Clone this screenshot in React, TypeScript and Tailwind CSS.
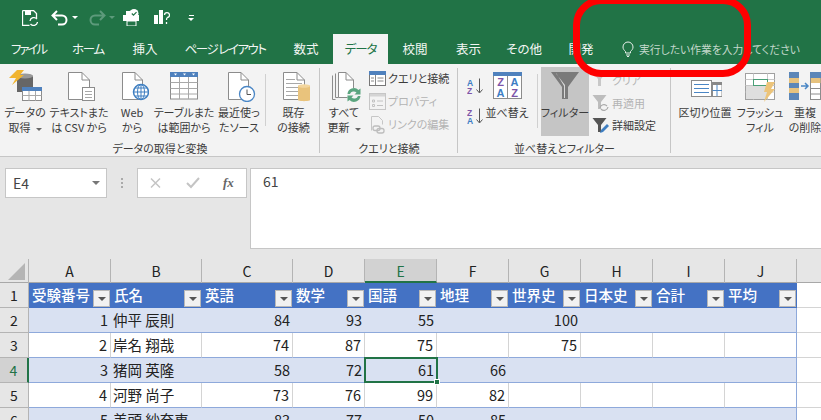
import React from 'react';

const DocPage = ({ x = 6, y = 4, w = 22, h = 28, lines = false }: { x?: number; y?: number; w?: number; h?: number; lines?: boolean }) => (
  <g>
    <path d={`M${x + 0.5} ${y + 0.5}H${x + w - 8}L${x + w - 0.5} ${y + 8}V${y + h - 0.5}H${x + 0.5}Z`} fill="#fff" stroke="#8c8c8c" />
    <path d={`M${x + w - 8} ${y + 0.5}V${y + 8}H${x + w - 0.5}`} fill="none" stroke="#8c8c8c" />
    {lines && (
      <path d={`M${x + 3} ${y + 7.5}h9M${x + 3} ${y + 11.5}h${w - 6}M${x + 3} ${y + 15.5}h${w - 6}M${x + 3} ${y + 19.5}h${w - 6}M${x + 3} ${y + 23.5}h${w - 6}`} stroke="#a8a8a8" />
    )}
  </g>
);

const Ic = ({ children, w = 34, h = 34 }: { children: React.ReactNode; w?: number; h?: number }) => (
  <svg width={w} height={h} viewBox={`0 0 ${w} ${h}`} className="block shrink-0">
    {children}
  </svg>
);

const GetDataIcon = () => (
  <Ic>
    <path d="M9 9c0-2 4-3 8-3s8 1 8 3v15H9Z" fill="#666" />
    <ellipse cx="17" cy="8" rx="8" ry="2.5" fill="#999" />
    <path d="M9 2h7l-4 5h4L4 17l4-7H1Z" fill="#f1b42f" />
    <rect x="14.5" y="19.5" width="19" height="13" fill="#fff" stroke="#8c8c8c" />
    <rect x="14" y="19" width="20" height="4" fill="#4f81bd" />
    <path d="M14.5 27.5h19M21 23v10M27.500 23v10" stroke="#a8a8a8" />
  </Ic>
);

const TextIcon = () => (
  <Ic>
    <DocPage />
    <rect x="20.500" y="19.500" width="12" height="13" fill="#fff" stroke="#8c8c8c" />
    <path d="M23 23.500h7M23 26.500h7M23 29.500h7" stroke="#a8a8a8" />
  </Ic>
);

const WebIcon = () => (
  <Ic>
    <DocPage x={7} w={21} />
    <circle cx="26" cy="24" r="7.500" fill="#fff" stroke="#3f7fc1" strokeWidth="1.500" />
    <path d="M18.500 24h15M20 20h12M20 28h12M26 16.500v15" stroke="#3f7fc1" />
    <ellipse cx="26" cy="24" rx="3.500" ry="7.500" fill="none" stroke="#3f7fc1" />
  </Ic>
);

const TableIcon = () => (
  <Ic>
    <rect x="3.500" y="8" width="27" height="23" fill="#fff" stroke="#8c8c8c" />
    <rect x="3" y="4" width="28" height="5" fill="#4f81bd" />
    <path d="M3.500 14.500h27M3.500 20.500h27M3.500 26h27M12.500 9v22M21.500 9v22" stroke="#a8a8a8" />
    <path d="M7 5.500h3l-1.500 2ZM16 5.500h3l-1.500 2ZM25 5.500h3l-1.500 2Z" fill="#fff" />
  </Ic>
);

const RecentIcon = () => (
  <Ic>
    <DocPage w={21} />
    <circle cx="25" cy="26" r="7.500" fill="#fff" stroke="#4a86c5" strokeWidth="1.300" />
    <path d="M25 21.500v5h4" fill="none" stroke="#555" />
  </Ic>
);

const ExistingIcon = () => (
  <Ic>
    <DocPage lines />
    <path d="M21 18c0-1.500 12-1.500 12 0v14c0 1.500-12 1.500-12 0Z" fill="#e9c37c" />
    <ellipse cx="27" cy="18" rx="6" ry="1.700" fill="#f3d69e" />
  </Ic>
);

const RefreshAllIcon = () => (
  <Ic>
    <path d="M5.500 7.500v24h3M8.500 5.500v24h3" fill="none" stroke="#8c8c8c" />
    <DocPage x={11} w={16} h={26} />
    <circle cx="27" cy="27" r="7" fill="#f3f3f3" />
    <path d="M20.500 26a6.500 6.500 0 0 1 11-4l2-1.500v6h-6l2-2a4 4 0 0 0-6.500 1.500ZM33.500 28a6.500 6.500 0 0 1-11 4l-2 1.500v-6h6l-2 2a4 4 0 0 0 6.500-1.500Z" fill="#5aa57f" />
  </Ic>
);

const QueryIcon = () => (
  <Ic w={17} h={15}>
    <rect x="0.500" y="1" width="16" height="13.500" fill="#fff" stroke="#777" />
    <rect x="0" y="0" width="17" height="4" fill="#4f81bd" />
    <path d="M6.500 4v10M8.500 7h6M8.500 10h6M2 7h3M2 10h3" stroke="#888" />
  </Ic>
);

const PropsIcon = () => (
  <Ic w={17} h={17}>
    <rect x="0.500" y="0.500" width="16" height="16" fill="#f3f3f3" stroke="#c6c6c6" />
    <rect x="1" y="1" width="15" height="2.500" fill="#d4d4d4" />
    <path d="M3.500 7h2v2h-2ZM3.500 11.500h2v2h-2ZM8 8h6M8 12.500h6" fill="none" stroke="#c2c2c2" />
  </Ic>
);

const LinkIcon = () => (
  <Ic w={17} h={18}>
    <path d="M2.500 14.500V0.500h7l4 4v4" fill="#f3f3f3" stroke="#c6c6c6" />
    <rect x="4" y="10" width="7" height="4.500" rx="2" fill="none" stroke="#bdbdbd" strokeWidth="1.300" />
    <rect x="8" y="12.500" width="7" height="4.500" rx="2" fill="none" stroke="#bdbdbd" strokeWidth="1.300" />
  </Ic>
);

const SortIcon = ({ top, bottom }: { top: string; bottom: string }) => (
  <svg width="16" height="16" viewBox="0 0 16 16" className="block">
    <text x="0" y="7.500" fontSize="8.500" fontWeight="700" fontFamily="Liberation Sans" fill={top === 'A' ? '#3c7dc4' : '#7d55a8'}>{top}</text>
    <text x="0" y="15.500" fontSize="8.500" fontWeight="700" fontFamily="Liberation Sans" fill={bottom === 'A' ? '#3c7dc4' : '#7d55a8'}>{bottom}</text>
    <path d="M12.500 0.500v14M9.500 11.500l3 3.500 3-3.500" fill="none" stroke="#555" />
  </svg>
);

const BigSortIcon = () => (
  <Ic>
    <rect x="3.500" y="5" width="28" height="25.500" fill="#fff" stroke="#8c8c8c" />
    <rect x="3" y="4" width="29" height="4" fill="#4f81bd" />
    <path d="M17.500 8v22" stroke="#8c8c8c" />
    <g fontSize="11" fontWeight="700" fontFamily="Liberation Sans" textAnchor="middle">
      <text x="10.500" y="18" fill="#7d55a8">Z</text>
      <text x="10.500" y="28.500" fill="#3c7dc4">A</text>
      <text x="24.500" y="18" fill="#3c7dc4">A</text>
      <text x="24.500" y="28.500" fill="#7d55a8">Z</text>
    </g>
  </Ic>
);

const FunnelIcon = () => (
  <Ic>
    <path d="M3 4h28L20 19v12h-6V19Z" fill="#7a7a7a" />
    <path d="M8 5.500h0.500L16 18v12h1V17Z" fill="#d8d8d8" />
  </Ic>
);

const SmallFunnel = ({ color, children }: { color: string; children?: React.ReactNode }) => (
  <Ic w={18} h={18}>
    <path d="M0.500 1h14L9 8v7H6V8Z" fill={color} />
    {children}
  </Ic>
);

const TextToColumnsIcon = () => (
  <Ic>
    <rect x="3.500" y="12.500" width="20" height="16" fill="#fff" stroke="#8c8c8c" />
    <path d="M6 16.500h15M6 20.500h15M6 24.500h15" stroke="#4a86c5" />
    <rect x="24.500" y="14.500" width="9.500" height="14" fill="#fff" stroke="#8c8c8c" />
    <rect x="24" y="14" width="10" height="3" fill="#888" />
    <path d="M24.500 22.500h9.500M29 17v11" stroke="#4a86c5" />
  </Ic>
);

const FlashFillIcon = () => (
  <Ic>
    <rect x="2.500" y="5.500" width="29" height="26" fill="#fff" stroke="#a0a0a0" />
    <path d="M2.500 11.500h29M2.500 17.500h29M2.500 24h29M10.500 5.500v26M24.500 5.500v26" stroke="#c8c8c8" />
    <rect x="10.500" y="11.500" width="14" height="6" fill="#fff" stroke="#4aa078" />
    <rect x="3" y="18" width="21" height="13" fill="#dedede" />
    <path d="M24 14h8l-4 7h4L21 34l3-10h-3Z" fill="#ecc47a" />
  </Ic>
);

const DedupeIcon = () => (
  <Ic>
    <rect x="1" y="4" width="10" height="28" fill="#5b86b8" />
    <rect x="1" y="10" width="10" height="5" fill="#e6c27e" />
    <rect x="1" y="20" width="10" height="5" fill="#e6c27e" />
    <path d="M13 18h6M17 15l3 3-3 3" fill="none" stroke="#4a86c5" strokeWidth="1.500" />
    <rect x="22.500" y="4.500" width="10" height="27" fill="#fff" stroke="#8c8c8c" />
    <rect x="22" y="4" width="11" height="6" fill="#5b86b8" />
    <rect x="23" y="10" width="9.500" height="5" fill="#e6c27e" />
    <path d="M23 20.500h10M23 26h10" stroke="#8c8c8c" />
  </Ic>
);

const Caret = () => (
  <span className="inline-block ml-[5px] align-middle w-0 h-0 border-x-[3px] border-x-transparent border-t-[3px] border-t-[#666]" />
);

const BigBtn = ({ w, icon, lines, caret }: { w: string; icon: React.ReactNode; lines: string[]; caret?: boolean }) => (
  <div className={`${w} shrink-0 flex flex-col items-center`}>
    <div className="h-[39px] pt-[2px] flex justify-center w-[34px]">{icon}</div>
    {lines.map((l, i) => (
      <div key={i} className="h-[15px] leading-[15px] whitespace-nowrap">
        {l}
        {caret && i === lines.length - 1 && <Caret />}
      </div>
    ))}
  </div>
);

const SmallBtn = ({ icon, label, dim }: { icon: React.ReactNode; label: string; dim?: boolean }) => (
  <div className={`h-[23px] flex items-center gap-[2px] whitespace-nowrap ${dim ? 'text-[#b4b4b4]' : ''}`}>
    <div className="w-[18px] flex justify-center">{icon}</div>
    {label}
  </div>
);

const Group = ({ w, label, children, last }: { w: string; label: string; children: React.ReactNode; last?: boolean }) => (
  <div className={`${w} shrink-0 flex flex-col relative`}>
    <div className="h-[73px] flex pt-[2px]">{children}</div>
    {label && <div className="h-[19px] pt-[3px] leading-[17px] text-center whitespace-nowrap">{label}</div>}
    {!last && <div className="absolute right-0 top-[4px] bottom-[3px] w-px bg-[#c6c6c6]" />}
  </div>
);

const tabs = [
  { t: 'ファイル', w: 'w-[57px] tracking-[-2px]' },
  { t: 'ホーム', w: 'w-[62px] tracking-[-1.300px]' },
  { t: '挿入', w: 'w-[52px]' },
  { t: 'ページ レイアウト', w: 'w-[108px] tracking-[-1.500px]' },
  { t: '数式', w: 'w-[54px]' },
  { t: 'データ', w: 'w-[55px] tracking-[-1px]', active: true },
  { t: '校閲', w: 'w-[54px]' },
  { t: '表示', w: 'w-[53px]' },
  { t: 'その他', w: 'w-[58px]' },
  { t: '開発', w: 'w-[56px]' },
];

const cols = ['A', 'B', 'C', 'D', 'E', 'F', 'G', 'H', 'I', 'J'];
const heads = ['受験番号', '氏名', '英語', '数学', '国語', '地理', '世界史', '日本史', '合計', '平均'];
const rows: (string | number | null)[][] = [
  [1, '仲平 辰則', 84, 93, 55, null, 100, null, null, null],
  [2, '岸名 翔哉', 74, 87, 75, null, 75, null, null, null],
  [3, '猪岡 英隆', 58, 72, 61, 66, null, null, null, null],
  [4, '河野 尚子', 73, 76, 99, 82, null, null, null, null],
  [5, '美頭 紗奈恵', 83, 77, 50, 85, null, null, null, null],
];

const gridCols = 'grid grid-cols-[29px_82px_91px_91px_72px_72px_72px_72px_72px_72px_72px_24px]';

export default function App() {
  return (
    <div className="relative w-[821px] h-[420px] overflow-hidden bg-[#e6e6e6] text-[#333] font-['Noto_Sans_CJK_JP','Noto_Sans',sans-serif] text-[11px] [font-feature-settings:'palt']">
      {/* title bar */}
      <div className="h-[34px] bg-[#217346] flex items-center pl-[22px] pt-[1px]">
        <svg width="16" height="16" viewBox="0 0 16 16" className="block">
          <path d="M0.500 0.500h11l3 3V8M0.500 0.500v15h7" fill="none" stroke="#fff" strokeWidth="1.300" />
          <rect x="3" y="1" width="6" height="4" fill="#fff" />
          <path d="M8 11a4 4 0 0 1 7-2M15.500 12a4 4 0 0 1-7 2" fill="none" stroke="#fff" strokeWidth="1.300" />
        </svg>
        <svg width="18" height="16" viewBox="0 0 18 16" className="block ml-[13px]">
          <path d="M6 1L1.500 5.500 6 10M2 5.500h9a4.500 4.500 0 0 1 0 9H7" fill="none" stroke="#fff" strokeWidth="2" />
        </svg>
        <span className="ml-[3px] w-0 h-0 border-x-[3px] border-x-transparent border-t-[3px] border-t-white" />
        <svg width="18" height="16" viewBox="0 0 18 16" className="block ml-[10px]">
          <path d="M12 1l4.500 4.500L12 10M16 5.500H7a4.500 4.500 0 0 0 0 9h4" fill="none" stroke="#5d9a7b" strokeWidth="2" />
        </svg>
        <span className="ml-[3px] w-0 h-0 border-x-[3px] border-x-transparent border-t-[3px] border-t-[#5d9a7b]" />
        <svg width="17" height="17" viewBox="0 0 17 17" className="block ml-[8px]">
          <rect x="0" y="6" width="16" height="6" fill="#fff" />
          <rect x="3" y="2" width="8" height="5" fill="#fff" />
          <rect x="4" y="12" width="9" height="5" fill="#217346" stroke="#fff" />
          <circle cx="11" cy="4.500" r="4.500" fill="#fff" />
          <path d="M8.800 4.500l1.700 1.700 3-3" fill="none" stroke="#217346" strokeWidth="1.200" />
        </svg>
        <svg width="16" height="17" viewBox="0 0 16 17" className="block ml-[14px]">
          <rect x="0" y="6" width="4" height="9" fill="#fff" />
          <rect x="5" y="1" width="4" height="14" fill="#fff" />
          <path d="M10.500 6a2.500 2.500 0 1 1 3 2.500c-0.800 0.300-1 1-1 2.500M12.500 13v2" fill="none" stroke="#fff" strokeWidth="1.300" />
        </svg>
        <span className="ml-[18px] flex flex-col items-center gap-[2px]">
          <span className="w-[5px] h-px bg-white" />
          <span className="w-0 h-0 border-x-[3px] border-x-transparent border-t-[3px] border-t-white" />
        </span>
      </div>

      {/* tabs */}
      <div className="h-[30px] bg-[#217346] flex text-[12.500px] text-[#f2f6f3]">
        {tabs.map((t) => (
          <div key={t.t} className={`${t.w} shrink-0 text-center leading-[29px] whitespace-nowrap ${t.active ? 'bg-[#f3f3f3] text-[#217346]' : ''}`}>
            {t.t}
          </div>
        ))}
        <div className="ml-[13px] flex items-center gap-[5px] text-[10.800px] leading-[29px] text-[#c3d8cb] whitespace-nowrap">
          <svg width="12" height="16" viewBox="0 0 12 16" className="block">
            <path d="M3.500 10.500C2 9 1 8 1 6a5 5 0 0 1 10 0c0 2-1 3-2.500 4.500v1.500h-5ZM4 14h4M5 15.500h2" fill="none" stroke="#e8f0eb" />
          </svg>
          実行したい作業を入力してください
        </div>
      </div>

      {/* ribbon */}
      <div className="h-[93px] bg-[#f3f3f3] border-b border-[#c6c6c6] flex overflow-hidden text-[#3c3c3c]">
        <Group w="w-[320px]" label="データの取得と変換">
          <div className="w-[3px]" />
          <BigBtn w="w-[44px]" icon={<GetDataIcon />} lines={['データの', '取得']} caret />
          <BigBtn w="w-[64px]" icon={<TextIcon />} lines={['テキストまた', 'は CSV から']} />
          <BigBtn w="w-[42px]" icon={<WebIcon />} lines={['Web', 'から']} />
          <BigBtn w="w-[62px]" icon={<TableIcon />} lines={['テーブルまた', 'は範囲から']} />
          <BigBtn w="w-[48px]" icon={<RecentIcon />} lines={['最近使っ', 'たソース']} />
          <div className="w-px h-[52px] mt-[8px] mx-[2px] bg-[#d0d0d0]" />
          <BigBtn w="w-[51px]" icon={<ExistingIcon />} lines={['既存', 'の接続']} />
        </Group>
        <Group w="w-[138px]" label="クエリと接続">
          <BigBtn w="w-[48px]" icon={<RefreshAllIcon />} lines={['すべて', '更新']} caret />
          <div className="flex flex-col pt-[1px]">
            <SmallBtn icon={<QueryIcon />} label="クエリと接続" />
            <SmallBtn icon={<PropsIcon />} label="プロパティ" dim />
            <SmallBtn icon={<LinkIcon />} label="リンクの編集" dim />
          </div>
        </Group>
        <Group w="w-[213px]" label="並べ替えとフィルター">
          <div className="w-[27px] pl-[9px] pt-[12px] flex flex-col gap-[14px]">
            <SortIcon top="A" bottom="Z" />
            <SortIcon top="Z" bottom="A" />
          </div>
          <BigBtn w="w-[44px]" icon={<BigSortIcon />} lines={['並べ替え']} />
          <div className="w-px h-[54px] mt-[8px] ml-[8px] mr-[3px] bg-[#d0d0d0]" />
          <div className="w-[48px] h-[69px] mt-[1px] bg-[#c5c5c5] flex flex-col items-center">
            <div className="h-[38px] pt-[1px]"><FunnelIcon /></div>
            <div className="leading-[15px] whitespace-nowrap">フィルター</div>
          </div>
          <div className="flex flex-col pl-[3px] pt-[3px]">
            <SmallBtn icon={<SmallFunnel color="#c8c8c8" />} label="クリア" dim />
            <SmallBtn
              icon={
                <SmallFunnel color="#bdbdbd">
                  <path d="M8 14a4 4 0 0 1 7-2M16 13a4 4 0 0 1-7 2" fill="none" stroke="#a9a9a9" strokeWidth="1.200" />
                </SmallFunnel>
              }
              label="再適用"
              dim
            />
            <SmallBtn
              icon={
                <SmallFunnel color="#555">
                  <path d="M8 16l1-3 6-6 2 2-6 6Z" fill="#3f7fc1" />
                </SmallFunnel>
              }
              label="詳細設定"
            />
          </div>
        </Group>
        <Group w="w-[150px]" label="" last>
          <BigBtn w="w-[68px]" icon={<TextToColumnsIcon />} lines={['区切り位置']} />
          <BigBtn w="w-[42px]" icon={<FlashFillIcon />} lines={['フラッシュ', 'フィル']} />
          <div className="w-[2px]" />
          <BigBtn w="w-[48px]" icon={<DedupeIcon />} lines={['重複', 'の削除']} />
        </Group>
      </div>

      {/* formula bar */}
      <div className="h-[102px] pt-[11px] pl-[5px] flex items-start text-[14px] text-[#444]">
        <div className="w-[102px] h-[30px] bg-white border border-[#c6c6c6] flex items-center justify-between pl-[7px] pr-[6px]">
          E4
          <span className="w-0 h-0 border-x-[4px] border-x-transparent border-t-[4px] border-t-[#777]" />
        </div>
        <div className="w-[30px] h-[30px] flex flex-col items-center justify-center gap-[2px]">
          <span className="w-[2px] h-[2px] bg-[#aaa]" />
          <span className="w-[2px] h-[2px] bg-[#aaa]" />
          <span className="w-[2px] h-[2px] bg-[#aaa]" />
        </div>
        <div className="w-[110px] h-[30px] bg-white border border-[#c6c6c6] flex items-center">
          <svg width="108" height="28" viewBox="0 0 108 28" className="block">
            <path d="M13 9.500l9 9M22 9.500l-9 9" stroke="#c4c4c4" strokeWidth="1.500" />
            <path d="M49 14l4 4 8-9" fill="none" stroke="#c4c4c4" strokeWidth="2" />
            <text x="85" y="18" fontFamily="Liberation Serif" fontStyle="italic" fontWeight="700" fontSize="13" fill="#666">fx</text>
          </svg>
        </div>
        <div className="ml-[3px] flex-1 h-[81px] bg-white border-y border-l border-[#c6c6c6] pl-[12px] pt-[2px] leading-[20px] [font-feature-settings:normal]">
          61
        </div>
      </div>

      {/* sheet */}
      <div className="text-[14.500px] leading-[24px] text-[#222] [font-feature-settings:normal]">
        <div className={`${gridCols} h-[24px] bg-[#e6e6e6] border-b border-[#a8a8a8]`}>
          <div className="relative border-r border-[#b4b4b4]">
            <svg width="17" height="17" viewBox="0 0 17 17" className="absolute left-[8px] top-[4px]">
              <path d="M17 0v17H0Z" fill="#b5b5b5" />
            </svg>
          </div>
          {cols.map((c) => (
            <div key={c} className={`text-center border-r border-[#b4b4b4] text-[14px] ${c === 'E' ? 'bg-[#d2d2d2] text-[#217346] border-b-2 border-b-[#217346] h-[24px]' : ''}`}>
              {c}
            </div>
          ))}
          <div />
        </div>

        <div className={`${gridCols} h-[25px]`}>
          <div className="bg-[#e6e6e6] border-r border-b border-[#b4b4b4] text-center text-[14px]">1</div>
          {heads.map((h) => (
            <div key={h} className="relative bg-[#4472c4] text-white font-medium pl-[3px] leading-[23px] whitespace-nowrap">
              {h}
              <span className="absolute right-px bottom-px w-[17px] h-[17px] bg-[#f1f1f1] border border-[#b8b8b8] flex items-center justify-center">
                <span className="w-0 h-0 border-x-[4px] border-x-transparent border-t-[4px] border-t-[#555]" />
              </span>
            </div>
          ))}
          <div className="bg-white border-b border-[#d4d4d4]" />
        </div>

        {rows.map((r, i) => {
          const band = i % 2 === 0;
          return (
            <div key={i} className={`${gridCols} h-[25px]`}>
              <div className={`text-center text-[14px] border-b border-[#b4b4b4] ${i === 2 ? 'bg-[#d2d2d2] text-[#217346] border-r-2 border-r-[#217346]' : 'bg-[#e6e6e6] border-r border-r-[#b4b4b4]'}`}>
                {i + 2}
              </div>
              {r.map((v, j) => {
                const sel = i === 2 && cols[j] === 'E';
                return (
                  <div
                    key={j}
                    className={`relative border-b border-[#8ea9db] whitespace-nowrap ${typeof v === 'number' ? 'text-right pr-[3px]' : 'pl-[2px]'} ${band ? 'bg-[#d9e1f2]' : 'bg-white'} ${!band && j < 9 ? 'border-r border-r-[#d4d4d4]' : ''} ${j === 9 ? 'border-r border-r-[#8ea9db]' : ''}`}
                  >
                    {v}
                    {sel && (
                      <span className="absolute -left-px -top-px -right-px -bottom-px border-2 border-[#217346] z-10">
                        <span className="absolute -right-[4px] -bottom-[4px] w-[6px] h-[6px] bg-[#217346] border border-white" />
                      </span>
                    )}
                  </div>
                );
              })}
              <div className="bg-white border-b border-[#d4d4d4]" />
            </div>
          );
        })}
      </div>

      {/* red marker drawn on the screenshot */}
      <div className="absolute left-[573px] top-[-3px] w-[178px] h-[80px] border-[7px] border-[#ff0000] rounded-[28px] z-20" />
    </div>
  );
}
